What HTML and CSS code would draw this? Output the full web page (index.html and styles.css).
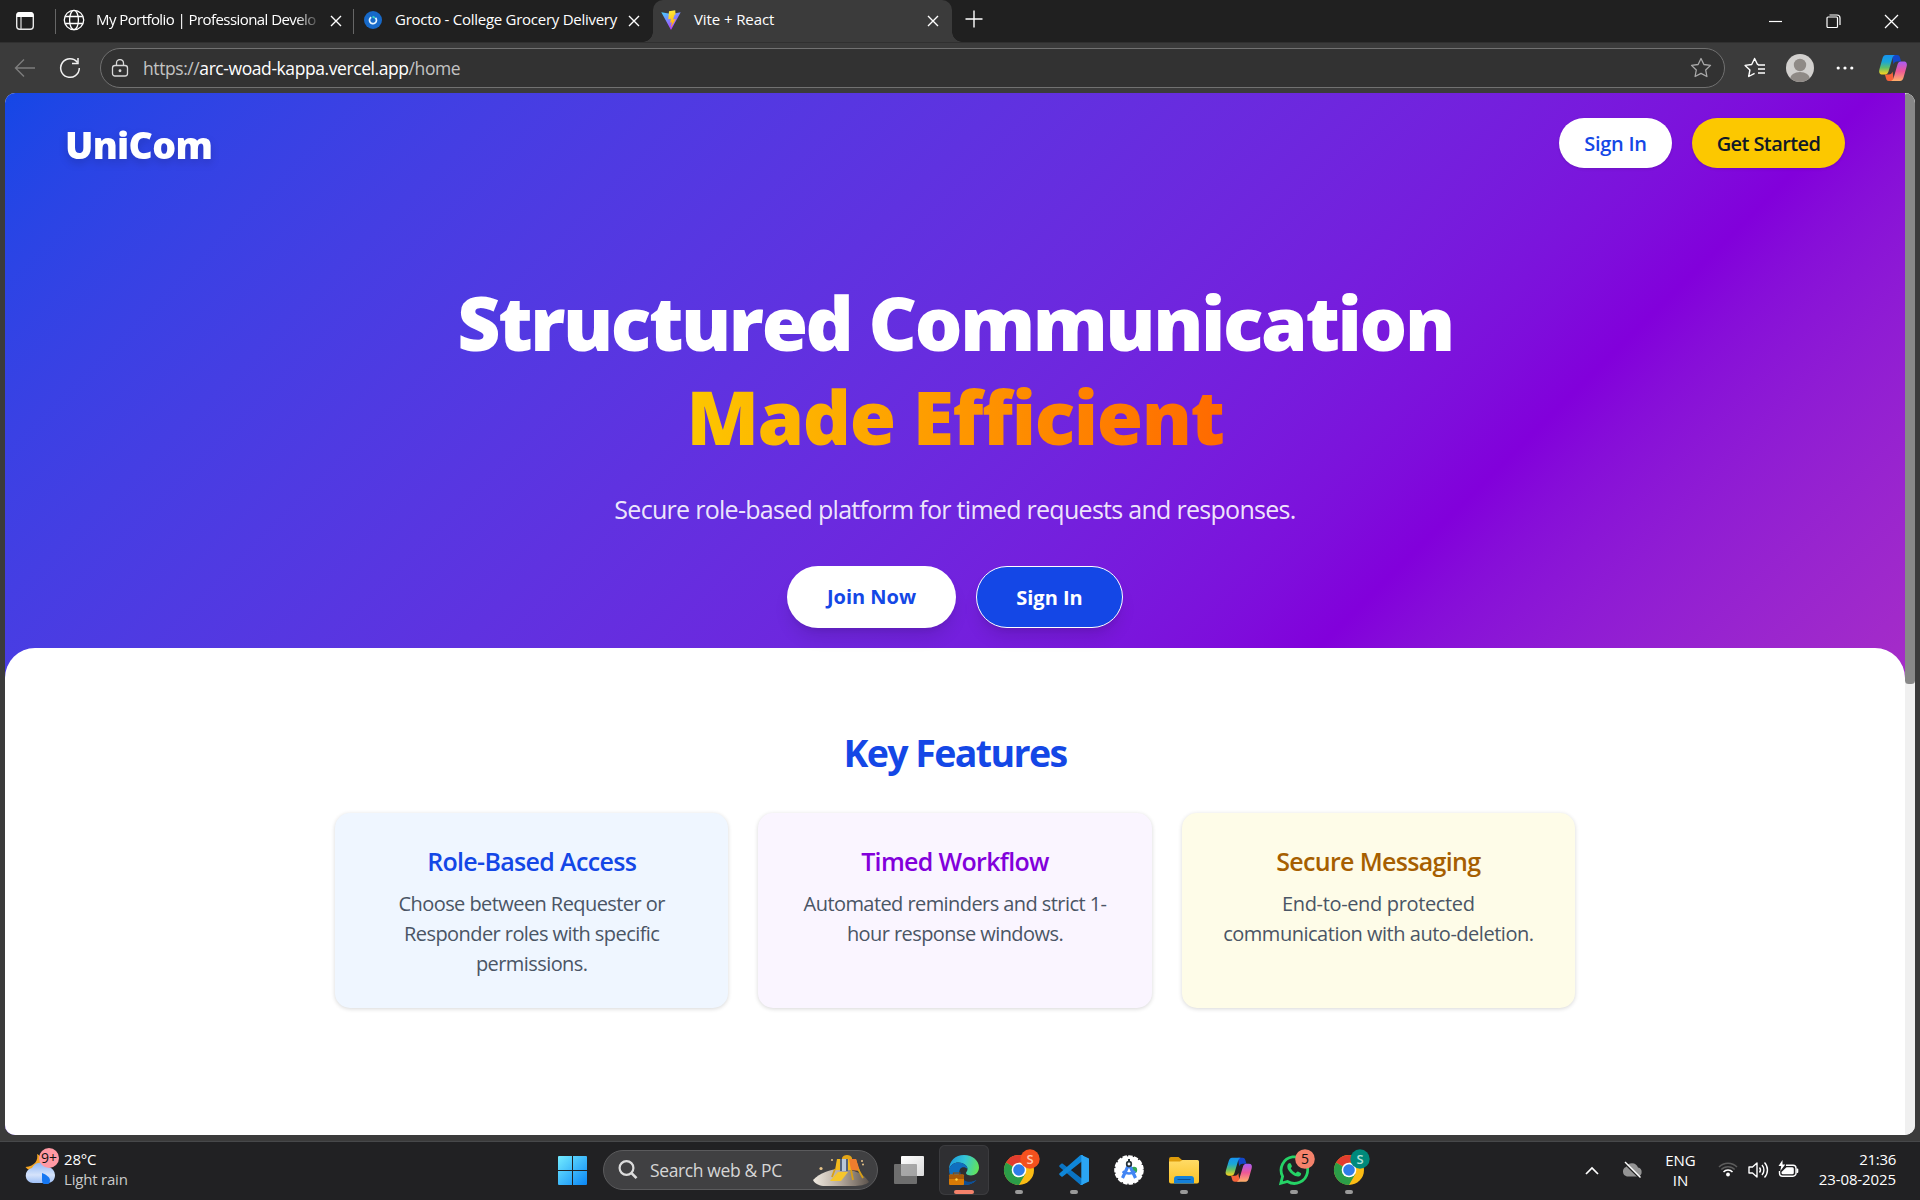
FILE: index.html
```html
<!DOCTYPE html>
<html lang="en">
<head>
<meta charset="utf-8">
<title>Vite + React</title>
<link rel="stylesheet" href="styles.css">
</head>
<body>
<div class="tabbar">
  <svg class="tab-actions" width="20" height="20" viewBox="0 0 20 20"><rect x="1.7" y="1.7" width="16.6" height="16.6" rx="3" fill="none" stroke="#e8e8e8" stroke-width="1.4"/><path d="M1.5 6V4a3 3 0 0 1 3-3h11a3 3 0 0 1 3 3v2z" fill="#fff"/><path d="M6 6v12" stroke="#cfcfcf" stroke-width="1.3"/></svg>
  <div class="tab tab-first">
    <svg width="22" height="22" viewBox="0 0 22 22" fill="none" stroke="#fff" stroke-width="1.3"><circle cx="11" cy="11" r="9.7"/><ellipse cx="11" cy="11" rx="4.4" ry="9.7"/><path d="M2.2 7.5h17.6M2.2 14.5h17.6"/></svg>
    <span class="tab-title fade"><span class="t-port">My Portfolio | Professional Develo</span></span>
    <svg class="x" width="12" height="12" viewBox="0 0 12 12"><path d="M1 1l10 10M11 1L1 11" stroke="#fff" stroke-width="1.4"/></svg>
  </div>
  <div class="tab tab-second">
    <svg width="18" height="18" viewBox="0 0 18 18"><circle cx="9" cy="9" r="9" fill="#1769c8"/><path d="M7.200 6.200a3.500 3.500 0 1 0 4.300.6" fill="none" stroke="#e8f6ff" stroke-width="1.700"/><path d="M8.500 5.500l2.500 1.500" stroke="#37d6c4" stroke-width="1.800"/></svg>
    <span class="tab-title"><span class="t-groc">Grocto - College Grocery Delivery</span></span>
    <svg class="x" width="12" height="12" viewBox="0 0 12 12"><path d="M1 1l10 10M11 1L1 11" stroke="#fff" stroke-width="1.4"/></svg>
  </div>
  <div class="tab tab-active">
    <svg width="20" height="20" viewBox="0 0 20 20"><defs><linearGradient id="va" x1="0" y1="0" x2=".6" y2="1"><stop stop-color="#41d1ff"/><stop offset="1" stop-color="#bd34fe"/></linearGradient><linearGradient id="vb" x1=".4" y1="0" x2=".6" y2="1"><stop stop-color="#ffea3a"/><stop offset="1" stop-color="#ffa800"/></linearGradient></defs><path d="M.3 2.2L10 20l9.7-17.8L10.5 4z" fill="url(#va)"/><path d="M14.2.2L8 1.3 7.3 9.300l2.600-.5-.7 4 1.700-.5-1.100 5.500 5-8.700-2.700.5 1.500-4.800 1-.3z" fill="url(#vb)"/></svg>
    <span class="tab-title"><span class="t-vite">Vite + React</span></span>
    <svg class="x" width="12" height="12" viewBox="0 0 12 12"><path d="M1 1l10 10M11 1L1 11" stroke="#fff" stroke-width="1.4"/></svg>
  </div>
  <svg class="plus" width="18" height="18" viewBox="0 0 18 18"><path d="M9 .5v17M.5 9h17" stroke="#fff" stroke-width="1.4"/></svg>
  <div class="window-buttons">
    <svg width="15" height="15" viewBox="0 0 15 15"><path d="M1 7.500h13" stroke="#fff" stroke-width="1.200"/></svg>
    <svg width="15" height="15" viewBox="0 0 15 15" fill="none" stroke="#fff" stroke-width="1.200"><rect x="1" y="3" width="10.500" height="10.500" rx="1"/><path d="M3.500 1h7.500a3 3 0 0 1 3 3v7"/></svg>
    <svg width="15" height="15" viewBox="0 0 15 15"><path d="M1 1l13 13M14 1L1 14" stroke="#fff" stroke-width="1.300"/></svg>
  </div>
</div>
<div class="toolbar">
  <svg width="22" height="22" viewBox="0 0 22 22" fill="none" stroke="#7d7d7d" stroke-width="1.400"><path d="M21 11H1.500M10 2.500L1.500 11l8.500 8.500"/></svg>
  <svg class="reload" width="22" height="22" viewBox="0 0 22 22" fill="none" stroke="#f3f3f3" stroke-width="1.500"><path d="M18.500 5.500A9.300 9.300 0 1 0 20.300 11"/><path d="M19 1v5.500h-6"/></svg>
  <div class="address">
    <svg width="18" height="18" viewBox="0 0 18 18" fill="none" stroke="#d8d8d8" stroke-width="1.300"><rect x="1.500" y="6.500" width="15" height="10.500" rx="2.500"/><path d="M5.500 6.500V4a3.500 3.500 0 0 1 7 0v2.500"/><circle cx="9" cy="11.700" r=".8" fill="#d8d8d8"/></svg>
    <span class="url"><i>https://</i>arc-woad-kappa.vercel.app<i>/home</i></span>
    <svg class="star" width="22" height="22" viewBox="0 0 22 22" fill="none" stroke="#a9a9a9" stroke-width="1.300" stroke-linejoin="round"><path d="M11 1.500l2.900 6 6.600.9-4.800 4.600 1.200 6.500-5.900-3.100-5.900 3.100 1.200-6.500L1.500 8.400l6.600-.9z"/></svg>
  </div>
  <svg class="fav" width="22" height="22" viewBox="0 0 22 22" fill="none" stroke="#fff" stroke-width="1.400" stroke-linejoin="round"><path d="M14.500 7.500h-1L10.600 1.500l-2.900 6-6.600.9 4.800 4.600-1.200 6.500 5.900-3.100M14 8h7M14 12h7M14 16h7"/></svg>
  <svg class="avatar" width="28" height="28" viewBox="0 0 28 28"><defs><clipPath id="av"><circle cx="14" cy="14" r="14"/></clipPath></defs><circle cx="14" cy="14" r="14" fill="#d2d0ce"/><g clip-path="url(#av)" fill="#8f8a86"><circle cx="14" cy="11" r="6.200"/><ellipse cx="14" cy="25" rx="10" ry="7"/></g></svg>
  <svg class="dots" width="18" height="4" viewBox="0 0 18 4" fill="#fff"><circle cx="2.200" cy="2" r="1.600"/><circle cx="9" cy="2" r="1.600"/><circle cx="15.800" cy="2" r="1.600"/></svg>
  <svg class="copilot" width="30" height="28" viewBox="0 0 30 28">
    <defs>
      <linearGradient id="c1" x1="0" y1="0" x2="0" y2="1"><stop stop-color="#1793f0"/><stop offset=".35" stop-color="#1aa6d8"/><stop offset=".65" stop-color="#5fbf6a"/><stop offset="1" stop-color="#ffd21c"/></linearGradient>
      <linearGradient id="c2" x1="0" y1="0" x2="0" y2="1"><stop stop-color="#a95cf5"/><stop offset=".5" stop-color="#ee5896"/><stop offset="1" stop-color="#ffb069"/></linearGradient>
      <g id="copilot-mark"><path d="M14 1h5c2 0 2.600 1.200 3.100 3l1 3.500h-4c-2 0-3 1-3.600 3z" fill="#1347c9"/><path d="M16 27h-5c-2 0-2.600-1.200-3.100-3l-1-3.500h4c2 0 3-1 3.600-3z" fill="#f5623a"/><path d="M8 1h9c-1.800.8-2.300 2-3 4.500l-3.500 12c-.6 2-1.700 3-3.500 3H4.500c-3 0-4-2-3-5.500L4.300 5C5 2.500 6 1 8 1z" fill="url(#c1)"/><path d="M22 27h-9c1.800-.8 2.300-2 3-4.500l3.500-12c.6-2 1.700-3 3.500-3h2.500c3 0 4 2 3 5.500L25.700 23c-.7 2.500-1.700 4-3.700 4z" fill="url(#c2)"/></g>
    </defs>
    <use href="#copilot-mark"/>
  </svg>
</div>
<div class="viewport">
  <div class="page">
    <div class="backdrop">
      <header class="nav">
        <div class="brand">UniCom</div>
        <div class="pill white">Sign In</div>
        <div class="pill yellow">Get Started</div>
      </header>
      <section class="hero">
        <h1><span class="t-h1">Structured Communication</span><br><span class="t-h2 grad">Made Efficient</span></h1>
        <p class="lead">Secure role-based platform for timed requests and responses.</p>
        <div class="cta">
          <div class="btn join">Join Now</div>
          <div class="btn sign">Sign In</div>
        </div>
      </section>
      <section class="features">
        <h2>Key Features</h2>
        <div class="cards">
          <div class="card blue"><h3>Role-Based Access</h3><p>Choose between Requester or<br>Responder roles with specific<br>permissions.</p></div>
          <div class="card purple"><h3>Timed Workflow</h3><p>Automated reminders and strict 1-<br>hour response windows.</p></div>
          <div class="card cream"><h3>Secure Messaging</h3><p><span class="loose">End-to-end protected</span><br><span class="mid">communication with auto-deletion.</span></p></div>
        </div>
      </section>
    </div>
  </div>
  <div class="scrollbar"><div class="thumb"></div></div>
</div>
<div class="taskbar">
  <div class="weather">
    <svg width="36" height="38" viewBox="0 0 36 38"><defs><linearGradient id="w1" x1="0" y1="0" x2="0" y2="1"><stop stop-color="#8fb6f5"/><stop offset=".6" stop-color="#d5e3fb"/><stop offset="1" stop-color="#9fc0f6"/></linearGradient></defs><path d="M12 8c1.500 6-2 12-11.500 13 3 4.500 10 5 14 1s4-11-2.500-14z" fill="#f5a623"/><path d="M8 37a7.500 7.500 0 0 1-1-14.900A9 9 0 0 1 23 21a8 8 0 0 1 7 8c0 5-3 8-8 8z" fill="url(#w1)"/><path d="M17 27c5 2 8 4.500 8 7.500a4 4 0 0 1-8 0z" fill="#1577f2"/><circle cx="24" cy="12" r="10" fill="#ff99a4"/><text x="24" y="17" class="count">9+</text></svg>
    <div class="wtext"><span>28°C</span><span class="dim">Light rain</span></div>
  </div>
  <svg class="start" width="29" height="29" viewBox="0 0 29 29"><defs><linearGradient id="s1" x1="0" y1="0" x2="1" y2="1"><stop stop-color="#73ecff"/><stop offset="1" stop-color="#0a86f5"/></linearGradient></defs><path d="M1 0h13v14H0V1a1 1 0 0 1 1-1zM15 0h13a1 1 0 0 1 1 1v13H15zM0 15h14v14H1a1 1 0 0 1-1-1zM15 15h14v13a1 1 0 0 1-1 1H15z" fill="url(#s1)"/></svg>
  <div class="search">
    <svg width="20" height="20" viewBox="0 0 20 20" fill="none" stroke="#dcdcdc" stroke-width="2.200"><circle cx="8.500" cy="8" r="6.900"/><path d="M13.500 13.200l5 5" stroke-width="2.600"/></svg>
    <span class="search-text">Search web &amp; PC</span>
    <svg class="lander" width="58" height="34" viewBox="0 0 58 34"><defs><linearGradient id="moon"><stop stop-color="#efe9e0"/><stop offset=".5" stop-color="#b3a79b"/><stop offset="1" stop-color="#5d544d"/></linearGradient></defs><path d="M1 27C8 20 18 16 28 16c14 0 24 5 29 13-3 3-10 4-16 4H13C8 33 3 31 1 27z" fill="url(#moon)"/><path d="M30 5c1-4 9-4 10 0v2H30z" fill="#e3a517"/><path d="M25 6h19l3 11H23z" fill="#f2b91d"/><path d="M37 6l7 0 4 12-9-1z" fill="#ef7d2e"/><path d="M28 6h8v12h-8z" fill="#52627a"/><path d="M30 6h4v12h-4z" fill="#b7c7d8"/><path d="M26 19h10l-7 9H18z" fill="#f6c62c"/><path d="M23 16l-3 8M46 16l5 9M39 17l2 10" stroke="#d9a016" stroke-width="1.800"/><g fill="#e8c58a"><circle cx="9" cy="15.500" r="1.600"/><circle cx="20" cy="7" r="1"/><circle cx="50" cy="8" r="1"/><circle cx="51" cy="11.500" r="1"/></g></svg>
  </div>
  <svg class="taskview" width="30" height="28" viewBox="0 0 30 28"><defs><linearGradient id="tv" x1="0" y1="0" x2="1" y2="1"><stop stop-color="#fff"/><stop offset="1" stop-color="#d9d9d9"/></linearGradient></defs><rect x="7" width="23" height="20" rx="1" fill="url(#tv)"/><rect y="8" width="23" height="20" rx="1" fill="#8c8c8c" fill-opacity=".72"/></svg>
  <div class="apps">
    <svg class="app active" viewBox="0 0 50 50"><defs><linearGradient id="e1" x1="0" y1=".3" x2="1" y2=".5"><stop stop-color="#1b9be0"/><stop offset=".5" stop-color="#35c6d6"/><stop offset="1" stop-color="#62e35a"/></linearGradient></defs><path d="M25 10c9 0 15 6 15 12.500 0 5-4 8-8 8-3 0-5-1-5-2.500 0-1 1.500-1.500 1.500-4 0-3.500-4-6.500-9-6.500-4.500 0-8 2.500-9.500 7C10 16 16.500 10 25 10z" fill="url(#e1)"/><path d="M10 24.500c1.500-4.500 5-7 9.500-7 5 0 9 3 9 6.500-1.500-1.500-3.500-2-5.500-1.500-4 1.500-3.500 9 1 13 4 3 9 2.500 13.500-.5C34 39 29 40 25 40c-9 0-15-7-15-15.500z" fill="#0f6fc0"/><path d="M21 26c-1 5 2 9 7 10.500 3 .8 6-.1 9.500-1.500C34 39 29 40 25 40z" fill="#0d4f97"/><rect x="10" y="29.500" width="15" height="10.500" rx="1" fill="#d97b06"/><path d="M10 31a1.500 1.500 0 0 1 1.500-1.500h12A1.500 1.500 0 0 1 25 31v3H10z" fill="#a85a08"/><path d="M14.500 29.500V28h6v1.500" fill="none" stroke="#8a4a08" stroke-width="1.200"/><circle cx="17.500" cy="34.500" r="1.200" fill="#ffd84a"/><rect x="15" y="45" width="20" height="4" rx="2" fill="#f4826b"/></svg>
    <svg class="app" viewBox="0 0 50 50"><defs><g id="chrome"><circle cx="25" cy="25" r="15" fill="#fbbc14"/><path d="M25 25L12 17.500A15 15 0 0 1 38 17.500H25z" fill="#e23c2e"/><path d="M12 17.500a15 15 0 0 0 13 22.500l6.500-11.300L25 25z" fill="#2b9d48"/><circle cx="25" cy="25" r="7.300" fill="#fff"/><circle cx="25" cy="25" r="5.800" fill="#2f7de9"/></g></defs><use href="#chrome"/><circle cx="36" cy="14" r="9.700" fill="#f4511e"/><text x="36" y="18.500" class="initial" fill="#ffc9b5">S</text><rect x="21" y="45" width="8" height="4" rx="2" fill="#9a9a9a"/></svg>
    <svg class="app" viewBox="0 0 50 50"><path d="M10.300 20.500l2-1.800c.5-.4 1-.4 1.500 0L34 34.500V40h-1.500c-.8 0-1.300-.3-1.800-.8L10.300 21.800z" fill="#0a74c4"/><path d="M10.300 29.800l2 1.700c.5.400 1 .4 1.500 0L34 15.500V10h-1.500c-.8 0-1.300.3-1.800.8L10.300 28.500z" fill="#0f86d8"/><path d="M32.500 10l7.500 3.500v23L32.500 40c-.8.2-1.500 0-2-.6.9.6 1.800.2 1.800-.9V11.500c0-1.100-.9-1.500-1.800-.9.500-.6 1.200-.8 2-.6z" fill="#2ba5f3"/><rect x="21" y="45" width="8" height="4" rx="2" fill="#9a9a9a"/></svg>
    <svg class="app" viewBox="0 0 50 50"><circle cx="25" cy="25" r="13.800" fill="#fff"/><circle cx="25" cy="25" r="13.800" fill="none" stroke="#fff" stroke-width="2" stroke-dasharray="4.500 1.300"/><circle cx="30" cy="25" r="3.200" fill="#34a853"/><path d="M25 19l-6.500 14M25 19l6.500 14" stroke="#4285f4" stroke-width="3.200"/><path d="M18.500 26.500q6.500 4 13 0" stroke="#4285f4" stroke-width="2.400" fill="none"/><circle cx="25" cy="19" r="2.300" fill="#fff" stroke="#263238" stroke-width="1.700"/><path d="M25 14v3" stroke="#263238" stroke-width="2"/></svg>
    <svg class="app" viewBox="0 0 50 50"><defs><linearGradient id="f1" x1="0" y1="0" x2="0" y2="1"><stop stop-color="#ffdb66"/><stop offset="1" stop-color="#fbc226"/></linearGradient></defs><path d="M10 14a2 2 0 0 1 2-2h7.500l3.500 3h15v5H10z" fill="#dd9b0a"/><path d="M10 16.500h11l2.500-1.500H38.500A1.500 1.500 0 0 1 40 16.500v20a2 2 0 0 1-2 2H12a2 2 0 0 1-2-2z" fill="url(#f1)"/><path d="M15 38.500V34a3 3 0 0 1 3-3h14a3 3 0 0 1 3 3v4.500z" fill="#1480d8"/><path d="M18.500 34.500h13" stroke="#0a4f96" stroke-width="1.200"/><rect x="21" y="45" width="8" height="4" rx="2" fill="#9a9a9a"/></svg>
    <svg class="app" viewBox="0 0 50 50"><use href="#copilot-mark" transform="translate(10.500 11.800) scale(.95 .92)"/></svg>
    <svg class="app" viewBox="0 0 50 50"><path d="M11.800 38.300l1.800-7A13.300 13.300 0 1 1 18.500 36.500z" fill="none" stroke="#25d366" stroke-width="2.800"/><path d="M19.500 18.500c.8-.8 1.800-.8 2.200 0l1.200 2.600c.2.600-.8 1.700-1.200 2.200 1.200 2.300 3 3.900 5.200 4.900.7-.8 1.300-1.900 2.100-1.600l2.700 1.300c.9.500.3 2.400-.7 3-2 1.200-4.600.6-7.700-1.600-3-2.200-5-5.200-5-7.600 0-1.400.5-2.500 1.200-3.200z" fill="#25d366"/><circle cx="36" cy="14" r="9.800" fill="#f4826b"/><text x="36" y="19" class="count">5</text><rect x="21" y="45" width="8" height="4" rx="2" fill="#9a9a9a"/></svg>
    <svg class="app" viewBox="0 0 50 50"><use href="#chrome"/><circle cx="36" cy="14" r="9.700" fill="#00897b"/><text x="36" y="18.500" class="initial" fill="#b5e3dc">S</text><rect x="21" y="45" width="8" height="4" rx="2" fill="#9a9a9a"/></svg>
  </div>
  <div class="tray">
    <svg class="chev" width="14" height="9" viewBox="0 0 14 9"><path d="M1 8l6-6 6 6" fill="none" stroke="#fff" stroke-width="1.700"/></svg>
    <svg class="cloud" width="22" height="18" viewBox="0 0 22 18"><path d="M6 15.500a5 5 0 0 1-1-9.500A6.500 6.500 0 0 1 17 6.500a4.600 4.600 0 0 1 0 9z" fill="#949494"/><path d="M3 2l16 15.500" stroke="#202020" stroke-width="1.600"/><path d="M4 1l15.500 15.500" stroke="#fff" stroke-width="1.400"/></svg>
    <div class="lang"><span>ENG</span><span>IN</span></div>
    <svg class="wifi" width="20" height="16" viewBox="0 0 20 16" fill="none" stroke-width="1.500"><path d="M1 6a12.600 12.600 0 0 1 18 0" stroke="#5c5c5c"/><path d="M3.300 8.600a9.200 9.200 0 0 1 13.400 0" stroke="#5c5c5c"/><path d="M5.500 11a6 6 0 0 1 9 0" stroke="#fff"/><circle cx="10" cy="13.500" r="1.900" fill="#fff"/></svg>
    <svg class="vol" width="21" height="18" viewBox="0 0 21 18" fill="none" stroke="#fff" stroke-width="1.400" stroke-linejoin="round"><path d="M1 6h3.500L9 2v14l-4.500-4H1z"/><path d="M11.500 6.500a4 4 0 0 1 0 5M14 4a7.500 7.500 0 0 1 0 10M16.500 1.500a11 11 0 0 1 0 15"/></svg>
    <svg class="batt" width="21" height="18" viewBox="0 0 21 18"><path d="M8 5.200h7a3 3 0 0 1 3 3v5a3 3 0 0 1-3 3H4.500a3 3 0 0 1-3-3V11" fill="none" stroke="#fff" stroke-width="1.400"/><path d="M8.500 7.200h5.800a1.500 1.500 0 0 1 1.500 1.500v4a1.500 1.500 0 0 1-1.500 1.500H5a1.500 1.500 0 0 1-1.500-1.500V12z" fill="#fff"/><path d="M18.500 8.500h.8a1 1 0 0 1 1 1v2.500a1 1 0 0 1-1 1h-.8z" fill="#fff"/><path d="M4.500 0L.5 6h2.700L2.300 11l5-6.500H4.500z" fill="#fff"/></svg>
    <div class="clock"><span class="time">21:36</span><span>23-08-2025</span></div>
  </div>
</div>
</body>
</html>
```
FILE: styles.css
```css
* { box-sizing: border-box; }
html, body { margin: 0; height: 100%; }
body {
  width: 1920px; height: 1200px; overflow: hidden;
  display: flex; flex-direction: column;
  background: #3b3b3b; color: #fff;
  font-family: "Open Sans", "Noto Sans", sans-serif;
}
svg { display: block; flex: none; }
h1, h2, h3, p { margin: 0; white-space: nowrap; }
span { white-space: nowrap; }

/* tab strip */
.tabbar { height: 42px; background: #202020; display: flex; align-items: center; padding: 0 21px 0 15px; font-size: 15px; line-height: 20px; }
.tab-actions { margin-right: 20px; }
.tab { display: flex; align-items: center; height: 42px; position: relative; padding-bottom: 2px; }
.tab-first { width: 298px; padding-left: 8px; }
.tab-first::before, .tab-second::before { content: ""; position: absolute; left: 0; top: 9px; width: 1px; height: 25px; background: #666; }
.tab-first .tab-title { margin-left: 11px; }
.tab-second { width: 300px; padding-left: 11px; }
.tab-second .tab-title { margin-left: 13px; }
.tab-active { width: 299px; padding-left: 8px; background: #3b3b3b; border-radius: 10px 10px 0 0; }
.tab-active::before, .tab-active::after { content: ""; position: absolute; bottom: 0; width: 10px; height: 10px; }
.tab-active::before { left: -10px; background: radial-gradient(circle at 0 0, transparent 9.5px, #3b3b3b 10px); }
.tab-active::after { right: -10px; background: radial-gradient(circle at 100% 0, transparent 9.5px, #3b3b3b 10px); }
.tab-active .tab-title { margin-left: 13px; }
.tab-title { flex: 1; padding-bottom: 2px; }
.t-port { letter-spacing: -0.57px; }
.t-groc { letter-spacing: -0.27px; }
.t-vite { letter-spacing: -0.1px; }
.fade { flex: 0 0 223px; margin-right: 11px; -webkit-mask-image: linear-gradient(90deg, #000 90%, transparent 101%); mask-image: linear-gradient(90deg, #000 90%, transparent 101%); }
.x { margin: 1px 13px 0 0; }
.fade + .x { margin-right: 0; }
.plus { margin: -4px 0 0 13px; }
.window-buttons { display: flex; gap: 43px; margin-left: auto; }

/* navigation toolbar */
.toolbar { height: 51px; border-top: 1px solid #303030; display: flex; align-items: center; padding: 0 12px 0 14px; }
.reload { margin-left: 23px; }
.address { margin-left: 19px; width: 1625px; height: 40px; border: 1px solid #717171; border-radius: 20px; background: #323232; display: flex; align-items: center; padding: 0 12px 0 10px; }
.url { margin-left: 14px; font-size: 17.5px; line-height: 24px; letter-spacing: -0.42px; padding-bottom: 1px; }
.url i { font-style: normal; color: #c3c3c3; }
.star { margin-left: auto; }
.fav { margin-left: 19px; }
.avatar { margin-left: 20px; }
.dots { margin-left: 22px; }
.copilot { margin-left: auto; }

/* web page */
.viewport { margin: 0 5px; height: 1042px; flex: none; display: flex; border-radius: 10px; overflow: hidden; background: #fff; }
.page { flex: 1; height: 1042px; overflow: hidden; }
.backdrop { height: 1837px; background: linear-gradient(135deg in oklab, #1447e6, #8200db, #f6339a); }
.scrollbar { width: 10px; background: #f0f0f0; }
.thumb { height: 591px; border-radius: 3px 10px 5px 5px; background: #888; }
.nav { display: flex; align-items: center; padding: 25px 60px; height: 100px; }
.brand { flex: 1; font-size: 37.5px; font-weight: 800; line-height: 45px; letter-spacing: -0.7px; padding-top: 3px; filter: drop-shadow(0 4px 4px rgba(0,0,0,.15)); }
.pill { height: 50px; border-radius: 25px; font-size: 20px; font-weight: 600; line-height: 52px; text-align: center; letter-spacing: -0.3px; box-shadow: 0 1px 3px rgba(0,0,0,.12); }
.white { width: 113px; background: #fff; color: #1447e6; margin-right: 20px; }
.yellow { width: 153px; background: #fcc800; color: #101828; letter-spacing: -0.6px; }
.hero { padding-top: 82px; height: 455px; text-align: center; }
h1 { font-size: 75px; line-height: 94px; font-weight: 800; }
.t-h1 { letter-spacing: -2.4px; }
.t-h2 { letter-spacing: -1.4px; }
.grad { background: linear-gradient(90deg, #fdc700, #ff6900); -webkit-background-clip: text; background-clip: text; color: transparent; }
.lead { margin-top: 29px; font-size: 25px; line-height: 35px; letter-spacing: -0.71px; color: rgba(255,255,255,.9); }
.cta { margin-top: 39px; display: flex; justify-content: center; gap: 20px; }
.btn { height: 62px; border-radius: 31px; font-size: 20px; font-weight: 700; line-height: 62px; box-shadow: 0 12px 18px -4px rgba(0,0,0,.12), 0 5px 7px -5px rgba(0,0,0,.12); }
.join { width: 169px; background: #fff; color: #1447e6; }
.sign { width: 147px; background: #1447e6; border: 1px solid #fff; }
.features { height: 1282px; background: #fff; border-radius: 30px 30px 0 0; padding: 80px 330px 0; text-align: center; }
h2 { font-size: 37.5px; line-height: 50px; font-weight: 700; letter-spacing: -1.6px; color: #1447e6; }
.cards { margin-top: 35px; display: grid; grid-template-columns: repeat(3, 1fr); gap: 30px; height: 195px; }
.card { border-radius: 15px; padding: 31px 0 0; box-shadow: 0 1px 4px rgba(0,0,0,.16); }
h3 { font-size: 25px; line-height: 35px; font-weight: 600; letter-spacing: -0.67px; }
.card p { margin-top: 10px; font-size: 20px; line-height: 30px; letter-spacing: -0.57px; color: #4a5565; }
.card .loose { letter-spacing: -0.35px; }
.card .mid { letter-spacing: -0.48px; }
.blue { background: #eff6ff; }
.purple { background: #faf5ff; }
.cream { background: #fefce8; }
.blue h3 { color: #1447e6; }
.purple h3 { color: #8200db; }
.cream h3 { color: #a65f00; }

/* system taskbar */
.taskbar { margin-top: 6px; height: 59px; flex: none; display: flex; background: #212123; border-top: 1px solid #47484a; font-size: 15px; line-height: 20px; padding: 0 24px 0 25px; }
.weather { display: flex; width: 533px; padding-top: 4px; }
.wtext { display: flex; flex-direction: column; padding: 3px 0 0 3px; letter-spacing: -0.2px; }
.dim { color: #c9c9c9; }
.start { margin-top: 14px; }
.search { margin: 8px 16px 0; width: 275px; height: 40px; border-radius: 20px; background: #404042; border: 1px solid #5b5b5d; display: flex; align-items: center; padding: 0 7px 0 14px; }
.search-text { margin-left: 12px; flex: 1; font-size: 17.5px; line-height: 24px; letter-spacing: -0.37px; color: #d6d6d6; }
.taskview { margin-top: 14px; }
.apps { display: flex; gap: 5px; margin: 3px 0 0 15px; }
.app { width: 50px; height: 50px; border-radius: 6px; }
.active { background: #2f2f32; box-shadow: inset 0 0 0 1px #3b3b3e; }
.initial { font: 600 13px "Open Sans", sans-serif; text-anchor: middle; }
.count { font: 14px "Open Sans", sans-serif; text-anchor: middle; fill: #111; }
.tray { display: flex; margin-left: auto; }
.chev { margin-top: 24px; }
.cloud { margin: 19px 0 0 22px; }
.lang { margin: 8px 0 0 23px; width: 29px; display: flex; flex-direction: column; align-items: center; }
.wifi { margin: 19px 0 0 23px; }
.vol { margin: 19px 0 0 10px; }
.batt { margin: 18px 0 0 9px; }
.clock { margin: 7px 0 0 19px; width: 78px; display: flex; flex-direction: column; align-items: flex-end; letter-spacing: -0.1px; }
.time { letter-spacing: -0.3px; }
```
